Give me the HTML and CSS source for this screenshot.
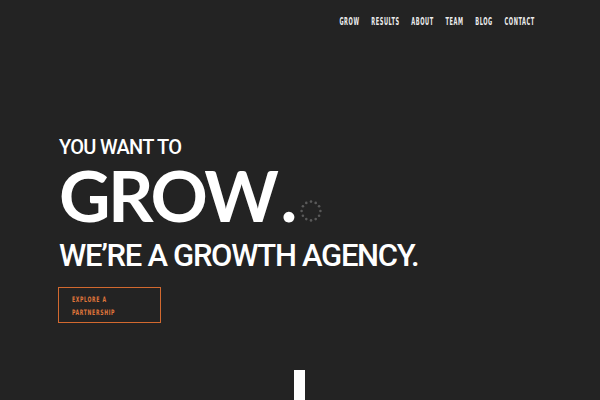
FILE: index.html
```html
<!DOCTYPE html>
<html lang="en">
<head>
<meta charset="utf-8">
<title>Grow</title>
<link rel="stylesheet" href="styles.css">
</head>
<body>
<div class="page">
  <header class="topbar">
    <nav class="nav">
      <a href="#">GROW</a>
      <a href="#">RESULTS</a>
      <a href="#">ABOUT</a>
      <a href="#">TEAM</a>
      <a href="#">BLOG</a>
      <a href="#">CONTACT</a>
    </nav>
  </header>
  <main class="hero">
    <p class="kicker">YOU WANT TO</p>
    <div class="big-row">
      <h1 class="big">GROW<span class="dot">.</span></h1>
      <svg class="spinner" width="22" height="22" viewBox="0 0 22 22" aria-hidden="true">
        <g fill="#5a5a5a">
          <circle cx="11" cy="1.6" r="1.3"/>
          <circle cx="15.7" cy="2.9" r="1.3"/>
          <circle cx="19.1" cy="6.3" r="1.3"/>
          <circle cx="20.4" cy="11" r="1.3"/>
          <circle cx="19.1" cy="15.7" r="1.3"/>
          <circle cx="15.7" cy="19.1" r="1.3"/>
          <circle cx="11" cy="20.4" r="1.3"/>
          <circle cx="6.3" cy="19.1" r="1.3"/>
          <circle cx="2.9" cy="15.7" r="1.3"/>
          <circle cx="1.6" cy="11" r="1.3"/>
          <circle cx="2.9" cy="6.3" r="1.3"/>
          <circle cx="6.3" cy="2.9" r="1.3"/>
        </g>
      </svg>
    </div>
    <h2 class="tagline">WE’RE A GROWTH AGENCY.</h2>
    <a class="cta" href="#"><span class="cta-text">EXPLORE A<br>PARTNERSHIP</span></a>
  </main>
  <div class="scroll-line"></div>
</div>
</body>
</html>
```
FILE: styles.css
```css
html, body {
  margin: 0;
  padding: 0;
  background: #232323;
}
.page {
  width: 600px;
  height: 400px;
  overflow: hidden;
  display: flex;
  flex-direction: column;
  font-family: Lato, "Open Sans", sans-serif;
  color: #ffffff;
}
.topbar {
  display: flex;
  justify-content: flex-end;
  padding: 17px 65px 0 0;
  height: 12px;
}
.nav {
  display: flex;
  gap: 21px;
  transform: scaleX(0.56);
  transform-origin: right center;
}
.nav a {
  font-family: "DejaVu Sans Condensed", "DejaVu Sans", sans-serif;
  font-weight: 700;
  font-size: 10px;
  letter-spacing: 1px;
  color: #ededed;
  text-decoration: none;
  line-height: 10px;
}
.hero {
  display: flex;
  flex-direction: column;
  align-items: flex-start;
  padding: 106px 0 0 59px;
}
.kicker {
  margin: 0;
  font-family: Roboto, sans-serif;
  font-size: 20px;
  font-weight: 500;
  line-height: 24px;
  letter-spacing: -0.7px;
}
.big-row {
  display: flex;
  align-items: flex-end;
  gap: 5px;
  margin-top: 1px;
}
.big {
  margin: 0;
  font-size: 71px;
  font-weight: 700;
  line-height: 70px;
  letter-spacing: -2.5px;
}
.dot {
  margin-left: 4px;
}
.spinner {
  margin-bottom: 8px;
}
.tagline {
  margin: 9px 0 0 0;
  font-family: Roboto, sans-serif;
  font-size: 31px;
  font-weight: 500;
  line-height: 34px;
  letter-spacing: -1.3px;
}
.cta {
  margin-top: 14px;
  margin-left: -1px;
  width: 103px;
  height: 36px;
  box-sizing: border-box;
  border: 1px solid #d2692f;
  padding: 5px 0 0 13px;
  text-decoration: none;
  display: block;
}
.cta-text {
  display: block;
  width: 100px;
  font-family: "DejaVu Sans Condensed", "DejaVu Sans", sans-serif;
  font-weight: 700;
  font-size: 7.5px;
  letter-spacing: 1px;
  line-height: 13px;
  color: #e0773b;
  transform: scaleX(0.68);
  transform-origin: left center;
}
.scroll-line {
  margin: auto auto 0 auto;
  width: 11px;
  height: 30px;
  background: #ffffff;
  position: relative;
  left: -0.5px;
}
```
